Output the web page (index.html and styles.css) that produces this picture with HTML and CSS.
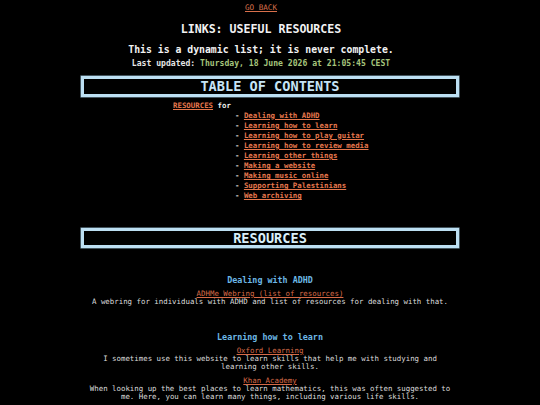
FILE: index.html
```html
<!DOCTYPE html>
<html lang="en">
<head>
<meta charset="utf-8">
<title>Links: Useful Resources</title>
<link rel="stylesheet" href="styles.css">
</head>
<body>
<main class="page">
  <header class="intro">
    <nav class="back"><a href="#">GO BACK</a></nav>
    <h1 class="title">LINKS: USEFUL RESOURCES</h1>
    <p class="tagline">This is a dynamic list; it is never complete.</p>
    <p class="updated">Last updated: <span class="date">Thursday, 18 June 2026 at 21:05:45 CEST</span></p>
  </header>

  <h2 class="box">TABLE OF CONTENTS</h2>
  <div class="toc">
    <div class="toc-head"><a href="#">RESOURCES</a> for</div>
    <ul class="toc-list">
      <li><a href="#">Dealing with ADHD</a></li>
      <li><a href="#">Learning how to learn</a></li>
      <li><a href="#">Learning how to play guitar</a></li>
      <li><a href="#">Learning how to review media</a></li>
      <li><a href="#">Learning other things</a></li>
      <li><a href="#">Making a website</a></li>
      <li><a href="#">Making music online</a></li>
      <li><a href="#">Supporting Palestinians</a></li>
      <li><a href="#">Web archiving</a></li>
    </ul>
  </div>

  <h2 class="box box-res">RESOURCES</h2>

  <section class="topic">
    <h3 class="topic-title">Dealing with ADHD</h3>
    <div class="entry">
      <a class="entry-link" href="#">ADHMe Webring (list of resources)</a>
      <p class="entry-desc">A webring for individuals with ADHD and list of resources for dealing with that.</p>
    </div>
  </section>

  <section class="topic">
    <h3 class="topic-title">Learning how to learn</h3>
    <div class="entry">
      <a class="entry-link" href="#">Oxford Learning</a>
      <p class="entry-desc">I sometimes use this website to learn skills that help me with studying and learning other skills.</p>
    </div>
    <div class="entry">
      <a class="entry-link" href="#">Khan Academy</a>
      <p class="entry-desc">When looking up the best places to learn mathematics, this was often suggested to me. Here, you can learn many things, including various life skills.</p>
    </div>
  </section>
</main>
</body>
</html>
```
FILE: styles.css
```css
html, body {
  margin: 0;
  padding: 0;
  background: #000;
}
body {
  font-family: "DejaVu Sans Mono", "Liberation Mono", monospace;
  color: #dcdcdc;
}
.page {
  width: 378px;
  margin: 0 auto;
  text-align: center;
}
a {
  color: #df7350;
}
.intro {
  padding-right: 18px;
}
.back {
  padding-top: 3px;
  font-size: 7.6px;
  line-height: 10px;
}
.back a {
  color: #d9704c;
}
.title {
  margin: 8.5px 0 0;
  font-size: 11.6px;
  line-height: 14px;
  font-weight: bold;
  color: #f2f2f2;
}
.tagline {
  margin: 8px 0 0;
  font-size: 9.8px;
  line-height: 12px;
  font-weight: bold;
  color: #f2f2f2;
}
.updated {
  margin: 2px 0 0;
  font-size: 8.1px;
  line-height: 10px;
  font-weight: bold;
  color: #e6e6e6;
}
.date {
  color: #a6c47c;
}
.box {
  margin: 8.5px 0 0;
  height: 15px;
  border: 3px solid #bcdff2;
  box-shadow: 0 0 0 0.6px #6f8a99;
  font-size: 13.6px;
  line-height: 15px;
  font-weight: bold;
  color: #c6e4f5;
}
.box-res {
  margin-top: 27px;
  height: 14px;
  line-height: 14px;
  color: #d8eef9;
}
.toc {
  margin-top: 3.5px;
  padding-left: 92px;
  text-align: left;
  font-size: 7.4px;
  line-height: 10.1px;
  font-weight: bold;
  color: #eeeeee;
}
.toc a {
  color: #e5774d;
}
.toc-list {
  list-style: none;
  margin: 0;
  padding: 0 0 0 62px;
}
.toc-list li::before {
  content: "- ";
  color: #dddddd;
}
.topic {
  margin-top: 27px;
}
.topic + .topic {
  margin-top: 26px;
}
.topic-title {
  margin: 0 0 3.5px;
  font-size: 8.4px;
  line-height: 10px;
  font-weight: bold;
  color: #6db8e6;
}
.entry + .entry {
  margin-top: 3.8px;
}
.entry-link {
  display: block;
  width: max-content;
  margin: 0 auto;
  font-size: 7.4px;
  line-height: 9px;
  color: #d86b48;
}
.entry-desc {
  margin: 0 auto;
  width: 370px;
  font-size: 7.4px;
  line-height: 8.5px;
  color: #dcdcdc;
}
```
